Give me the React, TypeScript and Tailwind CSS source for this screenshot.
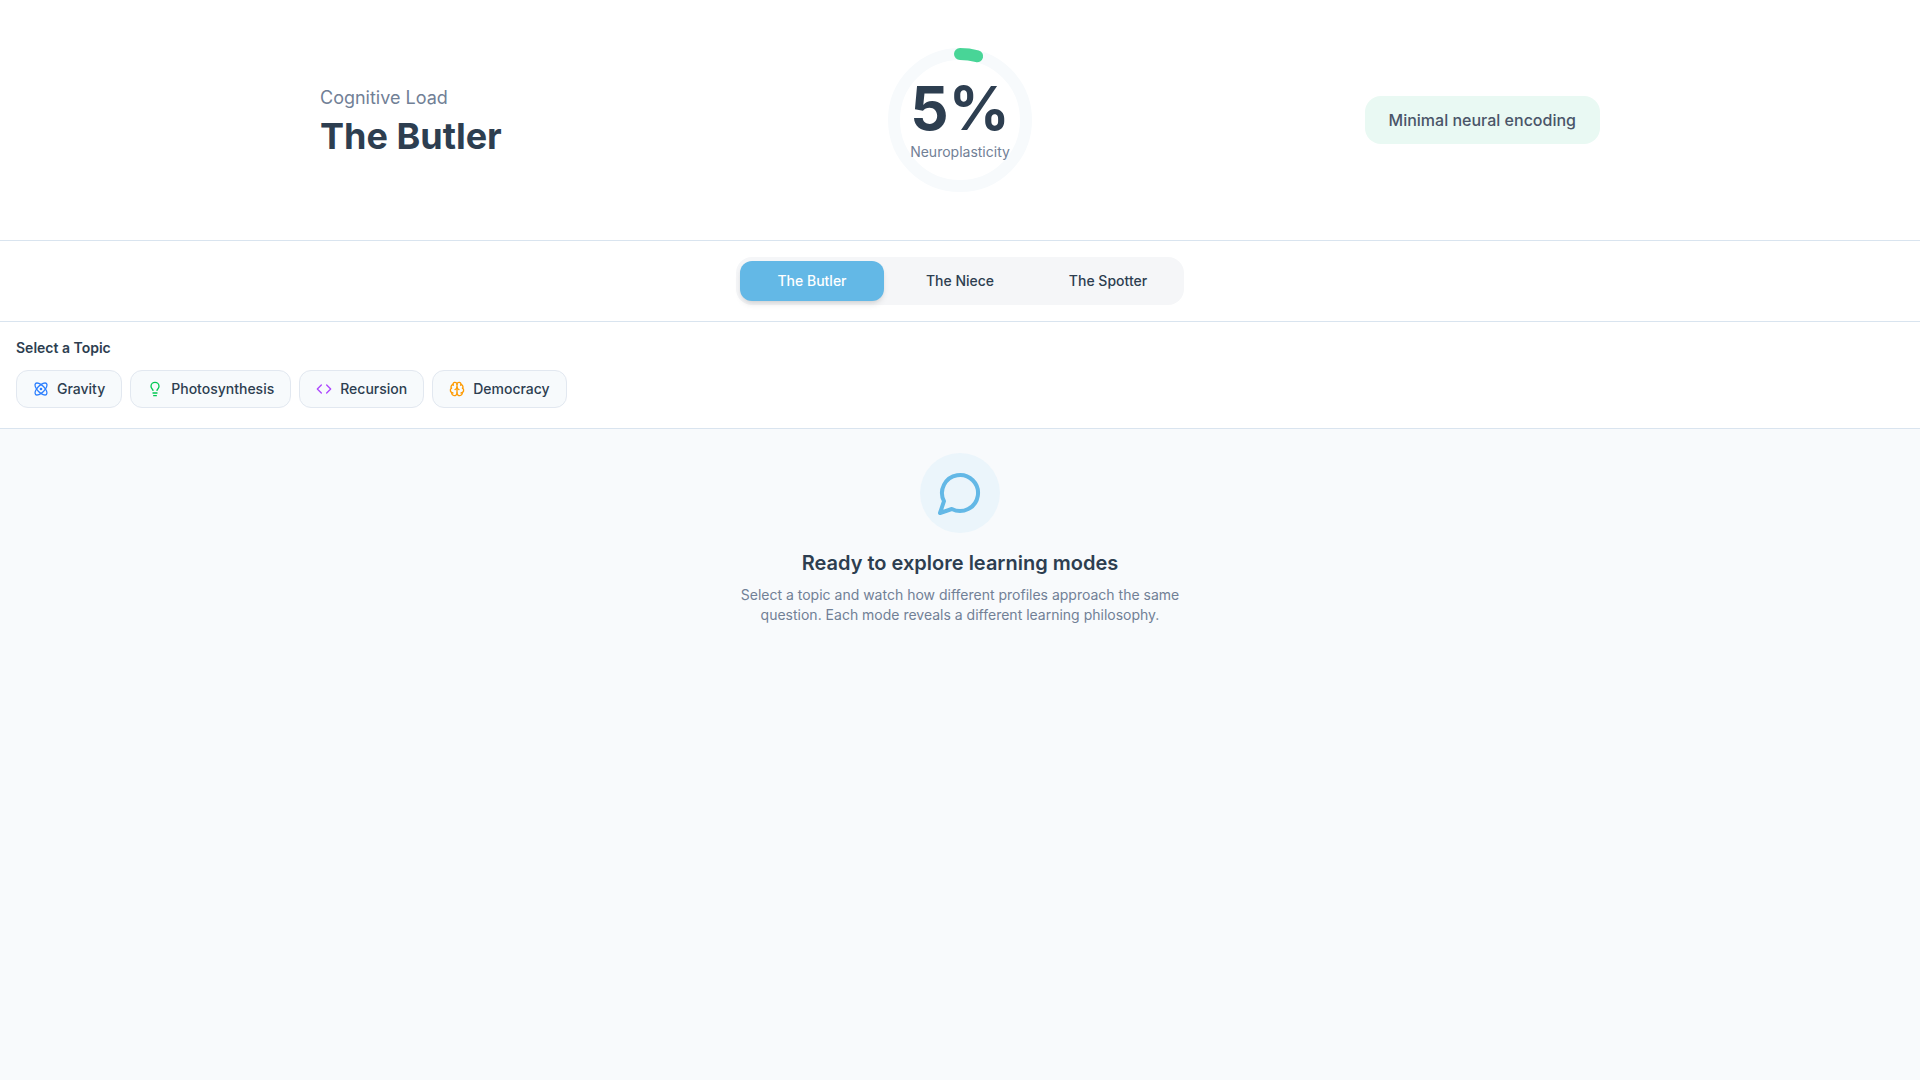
import { useState } from 'react';
import { Atom, Brain, Code, Lightbulb } from 'lucide-react';

const MODES = ['The Butler', 'The Niece', 'The Spotter'];

const TOPICS = [
  { label: 'Gravity', icon: Atom, color: 'text-blue-500' },
  { label: 'Photosynthesis', icon: Lightbulb, color: 'text-green-500' },
  { label: 'Recursion', icon: Code, color: 'text-purple-500' },
  { label: 'Democracy', icon: Brain, color: 'text-amber-500' },
];

// Ring gauge for the neuroplasticity score
function Gauge({ value }: { value: number }) {
  const radius = 66;
  const circumference = 2 * Math.PI * radius;
  const arc = circumference * (value / 100) * 0.84;
  return (
    <div className="relative w-[144px] h-[144px]">
      <svg width="144" height="144" viewBox="0 0 144 144" className="-rotate-90">
        <circle cx="72" cy="72" r={radius} fill="none" stroke="#f7fafc" strokeWidth="12" />
        <circle
          cx="72"
          cy="72"
          r={radius}
          fill="none"
          stroke="#48d597"
          strokeWidth="12"
          strokeLinecap="round"
          strokeDasharray={`${arc} ${circumference}`}
        />
      </svg>
      <div className="absolute inset-0 flex flex-col items-center justify-center">
        <span className="text-[60px] leading-[60px] font-bold text-[#2d3e50]">{value}%</span>
        <span className="text-sm text-[#718096] mt-1">Neuroplasticity</span>
      </div>
    </div>
  );
}

export default function App() {
  const [mode, setMode] = useState('The Butler');

  return (
    <div className="min-h-screen flex flex-col bg-white font-['Inter',sans-serif]">
      {/* Top row: gauge and summary */}
      <header className="h-[241px] border-b border-[#d9e4ef] flex items-center justify-center">
        <div className="w-[1280px] grid grid-cols-[1fr_144px_1fr] items-center">
          <div>
            <div className="text-lg text-[#718096] mb-1">Cognitive Load</div>
            <h1 className="text-4xl font-bold text-[#2d3e50]">{mode}</h1>
          </div>
          <Gauge value={5} />
          <div className="justify-self-end px-6 py-3 rounded-2xl bg-[#e9f9f3] text-base font-medium text-[#4a5568]">
            Minimal neural encoding
          </div>
        </div>
      </header>

      {/* Mode tabs */}
      <nav className="h-[81px] border-b border-[#d9e4ef] flex items-center justify-center">
        <div className="flex gap-1 p-1 rounded-2xl bg-[#f5f6f8]">
          {MODES.map((m) => (
            <button
              key={m}
              onClick={() => setMode(m)}
              className={`w-[144px] h-10 rounded-xl text-sm font-medium ${
                mode === m ? 'bg-[#63b8e6] text-white shadow-md' : 'text-[#2d3e50]'
              }`}
            >
              {m}
            </button>
          ))}
        </div>
      </nav>

      {/* Topic picker */}
      <section className="h-[107px] border-b border-[#d9e4ef] px-4 pt-4">
        <div className="text-sm font-semibold text-[#2d3e50] mb-3">Select a Topic</div>
        <div className="flex gap-2">
          {TOPICS.map(({ label, icon: Icon, color }) => (
            <button
              key={label}
              className="h-[38px] px-4 flex items-center gap-2 rounded-xl border border-[#e2e8f0] bg-[#f7fafc] text-sm font-medium text-[#2d3e50]"
            >
              <Icon size={16} className={color} />
              {label}
            </button>
          ))}
        </div>
      </section>

      {/* Empty state */}
      <main className="flex-1 bg-[#f8fafc] pt-6 flex flex-col items-center">
        <div className="w-20 h-20 rounded-full bg-[#ebf5fb] flex items-center justify-center mb-4">
          <svg
            width="48"
            height="48"
            viewBox="0 0 24 24"
            fill="none"
            stroke="#63b8e6"
            strokeWidth="2"
            strokeLinecap="round"
            strokeLinejoin="round"
          >
            <path d="M7.9 20A9 9 0 1 0 4 16.1L2 22Z" />
          </svg>
        </div>
        <h2 className="text-xl font-semibold text-[#2d3e50] mb-2">Ready to explore learning modes</h2>
        <p className="text-sm text-[#718096] text-center max-w-[448px]">
          Select a topic and watch how different profiles approach the same question. Each mode
          reveals a different learning philosophy.
        </p>
      </main>
    </div>
  );
}
